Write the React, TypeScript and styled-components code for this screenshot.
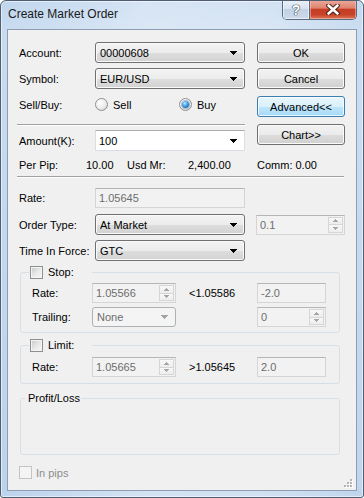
import React from "react";
import styled, { createGlobalStyle, css } from "styled-components";

const GlobalStyle = createGlobalStyle`
  html, body { margin: 0; padding: 0; }
  body {
    background: #ffffff;
    font-family: "Liberation Sans", Arial, sans-serif;
    font-size: 11px;
    color: #000;
  }
  *, *::before, *::after { box-sizing: border-box; }
`;

const Window = styled.div`
  width: 364px;
  height: 498px;
  display: flex;
  flex-direction: column;
  border: 1px solid #4f5e72;
  border-radius: 6px 6px 3px 3px;
  padding: 0 6px 6px;
  background:
    linear-gradient(to right, rgba(255,255,255,0) 0%, rgba(255,255,255,0.35) 40%, rgba(255,255,255,0.3) 75%, rgba(255,255,255,0.05) 100%),
    linear-gradient(to bottom, #c0d6ee 0%, #c8dbf0 6%, #bcd3ec 100%);
  box-shadow: inset 0 0 0 1px rgba(255,255,255,0.55);
  overflow: hidden;
`;

const TitleBar = styled.div`
  height: 28px;
  flex-shrink: 0;
  display: flex;
  align-items: flex-start;
  justify-content: space-between;
`;

const Title = styled.span`
  margin: 6px 0 0 1px;
  font-size: 12px;
  line-height: 15px;
  color: #1a1a1a;
`;

const CaptionGroup = styled.div`
  display: flex;
  margin-top: -1px;
  height: 20px;
  border: 1px solid #5a6a7f;
  border-top: none;
  border-radius: 0 0 5px 5px;
  overflow: hidden;
`;

const HelpButton = styled.div`
  width: 27px;
  display: flex;
  align-items: center;
  justify-content: center;
  border-right: 1px solid #5a6a7f;
  background: linear-gradient(#eaf1f9 0%, #d8e3f0 45%, #c2d1e3 50%, #cddbeb 100%);
  box-shadow: inset 0 0 0 1px rgba(255,255,255,0.5);
  font-weight: bold;
  font-size: 14px;
  line-height: 14px;
  color: #ffffff;
  text-shadow: 0 0 1px #2b394a, 0 0 1px #2b394a, 0 0 1px #2b394a;
`;

const CloseButton = styled.div`
  width: 46px;
  display: flex;
  align-items: center;
  justify-content: center;
  background: linear-gradient(#eaaa9b 0%, #de8470 42%, #c63c24 50%, #c8432a 78%, #de7a5d 100%);
  box-shadow: inset 0 0 0 1px rgba(255,220,210,0.45);
`;

const Client = styled.div`
  flex: 1;
  display: flex;
  flex-direction: column;
  background: #f0f0f0;
  border: 1px solid #8d9eb3;
  padding: 12px 0 0 11px;
`;

const TopSection = styled.div`
  display: flex;
  gap: 12px;
`;

const LeftColumn = styled.div`
  width: 226px;
  display: flex;
  flex-direction: column;
`;

const ButtonColumn = styled.div`
  width: 88px;
  display: flex;
  flex-direction: column;
`;

const DialogButton = styled.button<{ $mt?: number; $default?: boolean }>`
  width: 88px;
  height: 21px;
  margin: ${(p) => p.$mt ?? 0}px 0 0;
  padding: 0;
  font: inherit;
  font-size: 11px;
  color: #000;
  border-radius: 3px;
  border: 1px solid #707070;
  background: linear-gradient(#f2f2f2 0%, #ebebeb 50%, #dddddd 51%, #cfcfcf 100%);
  box-shadow: inset 0 0 0 1px #fbfbfb;
  ${(p) =>
    p.$default &&
    css`
      border-color: #3c7fb1;
      background: linear-gradient(#eaf6fd 0%, #d9f0fc 50%, #bee6fd 51%, #a7d9f5 100%);
      box-shadow: inset 0 0 0 1px rgba(255, 255, 255, 0.75);
    `}
`;

const FieldRow = styled.div<{ $mt?: number; $h?: number }>`
  display: flex;
  align-items: center;
  height: ${(p) => p.$h ?? 21}px;
  margin-top: ${(p) => p.$mt ?? 0}px;
  white-space: nowrap;
`;

const Cell = styled.span<{ $w: number; $muted?: boolean }>`
  width: ${(p) => p.$w}px;
  flex-shrink: 0;
  white-space: nowrap;
  color: ${(p) => (p.$muted ? "#6d6d6d" : "#000")};
`;

type ComboKind = "list" | "edit" | "disabled";

const Combo = styled.div<{ $w: number; $h?: number; $kind?: ComboKind; $ml?: number }>`
  width: ${(p) => p.$w}px;
  height: ${(p) => p.$h ?? 21}px;
  margin-left: ${(p) => p.$ml ?? 0}px;
  flex-shrink: 0;
  display: flex;
  align-items: center;
  padding: 0 4px 0 4px;
  ${(p) =>
    (p.$kind ?? "list") === "list" &&
    css`
      border: 1px solid #707070;
      border-radius: 3px;
      background: linear-gradient(#f3f3f3 0%, #ececec 50%, #dedede 51%, #d2d2d2 100%);
      box-shadow: inset 0 0 0 1px #fafafa;
    `}
  ${(p) =>
    p.$kind === "edit" &&
    css`
      padding-left: 3px;
      border: 1px solid #dadde3;
      border-top-color: #abadb3;
      background: #ffffff;
    `}
  ${(p) =>
    p.$kind === "disabled" &&
    css`
      border: 1px solid #adb2b5;
      border-radius: 3px;
      background: #f4f4f4;
      color: #6d6d6d;
    `}
`;

const ComboText = styled.span`
  flex: 1;
  overflow: hidden;
`;

const TextBox = styled.div<{ $w: number; $h?: number; $ml?: number }>`
  width: ${(p) => p.$w}px;
  height: ${(p) => p.$h ?? 20}px;
  margin-left: ${(p) => p.$ml ?? 0}px;
  flex-shrink: 0;
  display: flex;
  align-items: stretch;
  border: 1px solid #d5d5d5;
  border-top-color: #b5b5b5;
  background: #f2f2f2;
  color: #6d6d6d;
`;

const BoxText = styled.span`
  flex: 1;
  display: flex;
  align-items: center;
  padding-left: 3px;
`;

const SpinColumn = styled.div`
  width: 15px;
  margin: 1px;
  display: flex;
  flex-direction: column;
`;

const SpinPart = styled.div`
  flex: 1;
  display: flex;
  align-items: center;
  justify-content: center;
  border: 1px solid #d6d6d6;
  background: linear-gradient(#f8f8f8, #ededed);
  & + & {
    margin-top: -1px;
  }
`;

const Separator = styled.div<{ $w: number; $mt: number }>`
  width: ${(p) => p.$w}px;
  margin: ${(p) => p.$mt}px 0 0 -2px;
  height: 2px;
  border-top: 1px solid #a0a0a0;
  border-bottom: 1px solid #ffffff;
`;

const RadioOption = styled.label<{ $w: number }>`
  width: ${(p) => p.$w}px;
  display: flex;
  align-items: center;
  gap: 5px;
`;

const RadioCircle = styled.span<{ $checked?: boolean }>`
  width: 13px;
  height: 13px;
  border-radius: 50%;
  border: 1px solid #8e8f8f;
  background: radial-gradient(circle at 35% 30%, #ffffff 0%, #ececec 55%, #c9c9c9 100%);
  display: flex;
  align-items: center;
  justify-content: center;
  ${(p) =>
    p.$checked &&
    css`
      &::after {
        content: "";
        width: 7px;
        height: 7px;
        border-radius: 50%;
        background: radial-gradient(circle at 40% 35%, #c2ecff 0%, #3d9be0 45%, #0e4f8e 100%);
        box-shadow: 0 0 0 1px rgba(30, 80, 140, 0.35);
      }
    `}
`;

const CheckBox = styled.span<{ $disabled?: boolean }>`
  width: 13px;
  height: 13px;
  flex-shrink: 0;
  border: 1px solid ${(p) => (p.$disabled ? "#c4c4c4" : "#8e8f8f")};
  background: ${(p) =>
    p.$disabled ? "#f4f4f4" : "linear-gradient(135deg, #c3c7cc 0%, #e6e7e8 50%, #f8f8f8 100%)"};
  box-shadow: inset 0 0 0 1px ${(p) => (p.$disabled ? "#f4f4f4" : "#f4f4f4")};
`;

const Group = styled.fieldset<{ $mt: number }>`
  margin: ${(p) => p.$mt}px 0 0 1px;
  width: 320px;
  padding: 0;
  min-width: 0;
  border: 1px solid #d5dfe5;
  border-radius: 3px;
`;

const Legend = styled.legend<{ $ml: number; $pl: number; $pr: number }>`
  margin-left: ${(p) => p.$ml}px;
  padding: 0 ${(p) => p.$pr}px 0 ${(p) => p.$pl}px;
  height: 13px;
  line-height: 13px;
  display: flex;
  align-items: center;
  gap: 5px;
`;

const GroupBody = styled.div<{ $pt: number; $pb: number; $minH?: number }>`
  padding: ${(p) => p.$pt}px 0 ${(p) => p.$pb}px 11px;
  min-height: ${(p) => p.$minH ?? 0}px;
  display: flex;
  flex-direction: column;
  gap: 4px;
`;

const Footer = styled.div`
  flex: 1;
  margin-top: 11px;
  padding: 0 3px 2px 0;
  display: flex;
  justify-content: space-between;
  align-items: flex-end;
`;

const InPips = styled.label`
  align-self: flex-start;
  display: flex;
  align-items: center;
  gap: 4px;
  height: 13px;
  color: #8d8d8d;
`;

const DropArrow = ({ color = "#000" }: { color?: string }) => (
  <svg width="7" height="4" viewBox="0 0 7 4" shapeRendering="crispEdges" style={{ marginRight: 3, flexShrink: 0 }}>
    <path d="M0 0h7v1h-1v1h-1v1h-1v1h-1v-1h-1v-1h-1v-1h-1z" fill={color} />
  </svg>
);

const SpinArrow = ({ up }: { up?: boolean }) => (
  <svg width="5" height="3" viewBox="0 0 5 3" shapeRendering="crispEdges">
    <path d={up ? "M2 0h1v1h1v1h1v1h-5v-1h1v-1h1z" : "M0 0h5v1h-1v1h-1v1h-1v-1h-1v-1h-1z"} fill="#a6a6a6" />
  </svg>
);

const Spinner = () => (
  <SpinColumn>
    <SpinPart>
      <SpinArrow up />
    </SpinPart>
    <SpinPart>
      <SpinArrow />
    </SpinPart>
  </SpinColumn>
);

const CloseGlyph = () => (
  <svg width="14" height="11" viewBox="0 0 14 11">
    <path d="M2.5 1.5L11.5 9.5M11.5 1.5L2.5 9.5" stroke="#4a1f17" strokeWidth="4.6" strokeLinecap="round" />
    <path d="M2.5 1.5L11.5 9.5M11.5 1.5L2.5 9.5" stroke="#ffffff" strokeWidth="2.6" strokeLinecap="round" />
  </svg>
);

const Grip = () => (
  <svg width="9" height="9" viewBox="0 0 9 9" shapeRendering="crispEdges">
    {[
      [6, 0],
      [3, 3],
      [6, 3],
      [0, 6],
      [3, 6],
      [6, 6],
    ].map(([x, y]) => (
      <g key={`${x}-${y}`}>
        <rect x={x + 1} y={y + 1} width="2" height="2" fill="#ffffff" />
        <rect x={x} y={y} width="2" height="2" fill="#b4b4b4" />
      </g>
    ))}
  </svg>
);

export default function App() {
  return (
    <>
      <GlobalStyle />
      <Window>
        <TitleBar>
          <Title>Create Market Order</Title>
          <CaptionGroup>
            <HelpButton>?</HelpButton>
            <CloseButton>
              <CloseGlyph />
            </CloseButton>
          </CaptionGroup>
        </TitleBar>
        <Client>
          <TopSection>
            <LeftColumn>
              <FieldRow>
                <Cell $w={76}>Account:</Cell>
                <Combo $w={150}>
                  <ComboText>00000608</ComboText>
                  <DropArrow />
                </Combo>
              </FieldRow>
              <FieldRow $mt={5}>
                <Cell $w={76}>Symbol:</Cell>
                <Combo $w={150}>
                  <ComboText>EUR/USD</ComboText>
                  <DropArrow />
                </Combo>
              </FieldRow>
              <FieldRow $mt={5}>
                <Cell $w={76}>Sell/Buy:</Cell>
                <RadioOption $w={84}>
                  <RadioCircle />
                  Sell
                </RadioOption>
                <RadioOption $w={60}>
                  <RadioCircle $checked />
                  Buy
                </RadioOption>
              </FieldRow>
              <Separator $w={228} $mt={9} />
              <FieldRow $mt={4}>
                <Cell $w={76}>Amount(K):</Cell>
                <Combo $w={150} $kind="edit">
                  <ComboText>100</ComboText>
                  <DropArrow />
                </Combo>
              </FieldRow>
            </LeftColumn>
            <ButtonColumn>
              <DialogButton>OK</DialogButton>
              <DialogButton $mt={5}>Cancel</DialogButton>
              <DialogButton $mt={7} $default>
                Advanced&lt;&lt;
              </DialogButton>
              <DialogButton $mt={7}>Chart&gt;&gt;</DialogButton>
            </ButtonColumn>
          </TopSection>

          <FieldRow $mt={7} $h={13}>
            <Cell $w={67}>Per Pip:</Cell>
            <Cell $w={41}>10.00</Cell>
            <Cell $w={61}>Usd Mr:</Cell>
            <Cell $w={69}>2,400.00</Cell>
            <Cell $w={70}>Comm: 0.00</Cell>
          </FieldRow>
          <Separator $w={327} $mt={5} />

          <FieldRow $mt={10} $h={20}>
            <Cell $w={76}>Rate:</Cell>
            <TextBox $w={150}>
              <BoxText>1.05645</BoxText>
            </TextBox>
          </FieldRow>
          <FieldRow $mt={6}>
            <Cell $w={76}>Order Type:</Cell>
            <Combo $w={150}>
              <ComboText>At Market</ComboText>
              <DropArrow />
            </Combo>
            <TextBox $w={89} $h={20} $ml={11}>
              <BoxText>0.1</BoxText>
              <Spinner />
            </TextBox>
          </FieldRow>
          <FieldRow $mt={5}>
            <Cell $w={76}>Time In Force:</Cell>
            <Combo $w={150}>
              <ComboText>GTC</ComboText>
              <DropArrow />
            </Combo>
          </FieldRow>

          <Group $mt={5}>
            <Legend $ml={8} $pl={1} $pr={18}>
              <CheckBox />
              Stop:
            </Legend>
            <GroupBody $pt={4} $pb={5}>
              <FieldRow $h={20}>
                <Cell $w={60}>Rate:</Cell>
                <TextBox $w={84}>
                  <BoxText>1.05566</BoxText>
                  <Spinner />
                </TextBox>
                <Cell $w={68} style={{ marginLeft: 13 }}>
                  &lt;1.05586
                </Cell>
                <TextBox $w={69}>
                  <BoxText>-2.0</BoxText>
                </TextBox>
              </FieldRow>
              <FieldRow $h={20}>
                <Cell $w={60}>Trailing:</Cell>
                <Combo $w={84} $h={20} $kind="disabled">
                  <ComboText>None</ComboText>
                  <DropArrow color="#a3a3a3" />
                </Combo>
                <TextBox $w={69} $ml={81}>
                  <BoxText>0</BoxText>
                  <Spinner />
                </TextBox>
              </FieldRow>
            </GroupBody>
          </Group>

          <Group $mt={6}>
            <Legend $ml={8} $pl={1} $pr={18}>
              <CheckBox />
              Limit:
            </Legend>
            <GroupBody $pt={5} $pb={6}>
              <FieldRow $h={20}>
                <Cell $w={60}>Rate:</Cell>
                <TextBox $w={84}>
                  <BoxText>1.05665</BoxText>
                  <Spinner />
                </TextBox>
                <Cell $w={68} style={{ marginLeft: 13 }}>
                  &gt;1.05645
                </Cell>
                <TextBox $w={69}>
                  <BoxText>2.0</BoxText>
                </TextBox>
              </FieldRow>
            </GroupBody>
          </Group>

          <Group $mt={8}>
            <Legend $ml={4} $pl={3} $pr={1}>
              Profit/Loss
            </Legend>
            <GroupBody $pt={0} $pb={0} $minH={49} />
          </Group>

          <Footer>
            <InPips>
              <CheckBox $disabled />
              In pips
            </InPips>
            <Grip />
          </Footer>
        </Client>
      </Window>
    </>
  );
}
